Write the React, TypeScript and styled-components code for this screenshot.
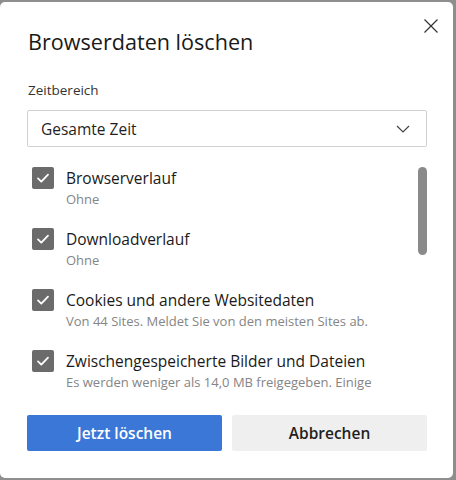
import React from "react";
import styled, { createGlobalStyle } from "styled-components";

const GlobalStyle = createGlobalStyle`
  html, body {
    margin: 0;
    padding: 0;
    background: #8e8e8e;
    font-family: "Open Sans", "Noto Sans", Arial, sans-serif;
  }
`;

const Dialog = styled.div`
  position: relative;
  box-sizing: border-box;
  width: 453px;
  height: 476px;
  margin-top: 2px;
  padding: 0 26px 0 27px;
  background: #ffffff;
  border-radius: 5px;
  display: flex;
  flex-direction: column;
  color: #1a1a1a;
`;

const CloseButton = styled.button`
  position: absolute;
  top: 12px;
  right: 10px;
  width: 24px;
  height: 24px;
  padding: 0;
  border: none;
  background: transparent;
  display: flex;
  align-items: center;
  justify-content: center;
`;

const Title = styled.h1`
  margin: 26px 0 0 1px;
  font-size: 21.6px;
  line-height: 28px;
  font-weight: 400;
  color: #1a1a1a;
`;

const FieldLabel = styled.div`
  margin: 24px 0 0 1px;
  font-size: 13.5px;
  line-height: 20px;
  color: #333333;
`;

const Select = styled.div`
  box-sizing: border-box;
  margin-top: 10px;
  height: 37px;
  border: 1px solid #d1d1d1;
  border-radius: 2px;
  display: flex;
  align-items: center;
  justify-content: space-between;
  padding: 0 16px 0 13px;
  font-size: 15.5px;
  color: #1f1f1f;
`;

const ListArea = styled.div`
  margin-top: 13px;
  height: 237px;
  display: flex;
  gap: 12px;
  overflow: hidden;
`;

const Items = styled.div`
  flex: 1;
  padding: 7px 0 0 5px;
  display: flex;
  flex-direction: column;
  gap: 19px;
`;

const Row = styled.div`
  display: flex;
  gap: 12px;
`;

const Box = styled.div`
  flex: none;
  width: 22px;
  height: 22px;
  border-radius: 2px;
  background: #6b6b6b;
  display: flex;
  align-items: center;
  justify-content: center;
`;

const Texts = styled.div`
  display: flex;
  flex-direction: column;
`;

const ItemTitle = styled.div`
  font-size: 15.5px;
  line-height: 22px;
  color: #1a1a1a;
`;

const ItemSub = styled.div`
  font-size: 13px;
  line-height: 20px;
  color: #858585;
  white-space: nowrap;
`;

const Track = styled.div`
  flex: none;
  width: 9px;
  padding-top: 7px;
`;

const Thumb = styled.div`
  width: 9px;
  height: 88px;
  border-radius: 5px;
  background: #8a8a8a;
`;

const Footer = styled.div`
  margin-top: 18px;
  display: flex;
  gap: 10px;
`;

const Button = styled.button<{ $primary?: boolean }>`
  flex: 1;
  height: 36px;
  border: none;
  border-radius: 2px;
  font-family: inherit;
  font-size: 15.5px;
  font-weight: 600;
  background: ${(p) => (p.$primary ? "#3a77d6" : "#efefef")};
  color: ${(p) => (p.$primary ? "#ffffff" : "#1f1f1f")};
`;

const Check = () => (
  <svg width="16" height="16" viewBox="0 0 16 16">
    <path d="M3 8.4 L6.3 11.6 L13 4.6" fill="none" stroke="#fff" strokeWidth="1.8" strokeLinecap="round" strokeLinejoin="round" />
  </svg>
);

const items = [
  { title: "Browserverlauf", sub: "Ohne" },
  { title: "Downloadverlauf", sub: "Ohne" },
  { title: "Cookies und andere Websitedaten", sub: "Von 44 Sites. Meldet Sie von den meisten Sites ab." },
  { title: "Zwischengespeicherte Bilder und Dateien", sub: "Es werden weniger als 14,0 MB freigegeben. Einige" },
];

export default function App() {
  return (
    <>
      <GlobalStyle />
      <Dialog>
        <CloseButton aria-label="Schließen">
          <svg width="16" height="16" viewBox="0 0 16 16">
            <path d="M1.5 1.5 L14.5 14.5 M14.5 1.5 L1.5 14.5" stroke="#333" strokeWidth="1.2" />
          </svg>
        </CloseButton>
        <Title>Browserdaten löschen</Title>
        <FieldLabel>Zeitbereich</FieldLabel>
        <Select>
          <span>Gesamte Zeit</span>
          <svg width="14" height="8" viewBox="0 0 14 8">
            <path d="M1 1 L7 7 L13 1" fill="none" stroke="#444" strokeWidth="1.2" />
          </svg>
        </Select>
        <ListArea>
          <Items>
            {items.map((item) => (
              <Row key={item.title}>
                <Box>
                  <Check />
                </Box>
                <Texts>
                  <ItemTitle>{item.title}</ItemTitle>
                  <ItemSub>{item.sub}</ItemSub>
                </Texts>
              </Row>
            ))}
          </Items>
          <Track>
            <Thumb />
          </Track>
        </ListArea>
        <Footer>
          <Button $primary>Jetzt löschen</Button>
          <Button>Abbrechen</Button>
        </Footer>
      </Dialog>
    </>
  );
}
